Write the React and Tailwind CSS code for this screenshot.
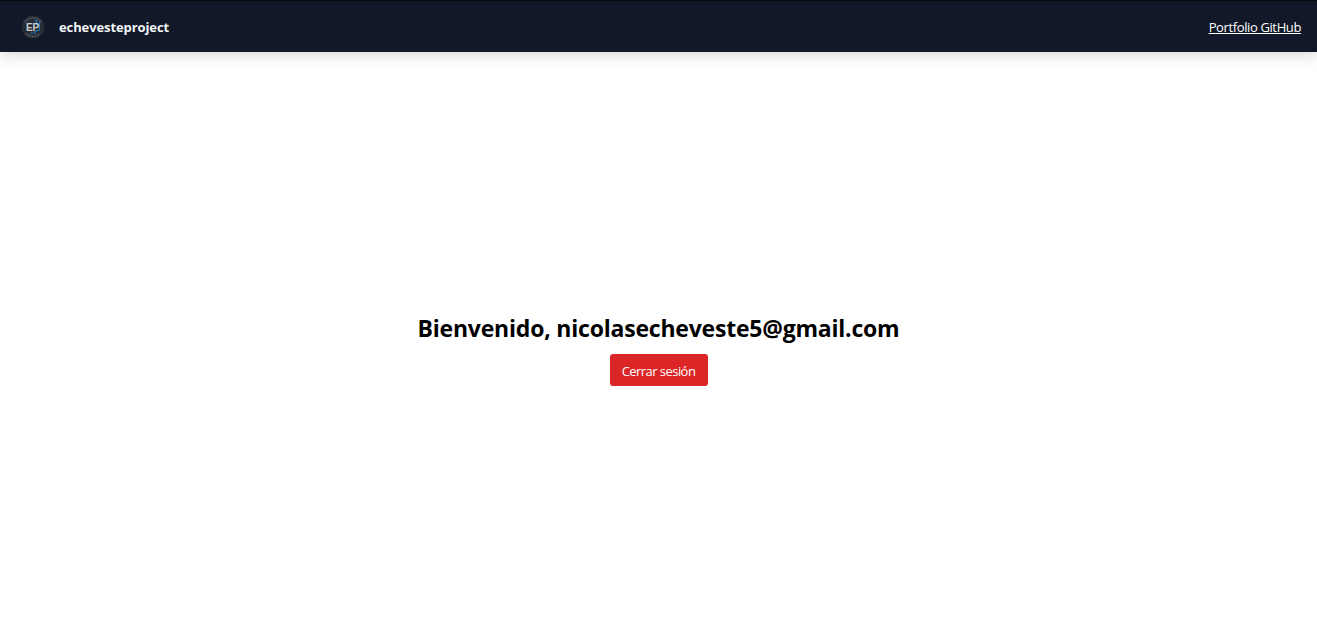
function Logo() {
  return (
    <svg className="size-6" viewBox="0 0 24 24" role="img" aria-label="EP">
      <circle cx="12" cy="12" r="11.5" fill="#262c34" />
      <path d="M4 7.5A9.2 9.2 0 0 1 20 7.5M5 18.2A9.2 9.2 0 0 0 19 18.2" fill="none" stroke="#8a9098" strokeWidth="1.5" strokeDasharray="1.3 0.9" opacity="0.5" />
      <path d="M13.500 5.500h2v3l3 1v5.500l-4.500 1.500v2.500M18.500 6.500v3M9.500 18h2.500" fill="none" stroke="#1a7cc4" strokeWidth="1.2" opacity="0.9" />
      <text x="11.6" y="15.6" textAnchor="middle" fontSize="10" fontWeight="600" fontFamily="Liberation Sans, sans-serif" fill="#c9cdd1">EP</text>
    </svg>
  );
}

export default function App() {
  return (
    <div className="flex h-screen flex-col bg-white font-['Open_Sans','Noto_Sans',sans-serif] text-black">
      <header className="flex h-[52px] shrink-0 items-center justify-between border-t border-[#09090b] bg-[#111827] pl-[21px] pr-4 text-white shadow-[0_4px_13px_rgba(0,0,0,0.15)]">
        <div className="flex items-center gap-[14px]">
          <Logo />
          <span className="pt-0.5 text-[13px] font-bold tracking-[-0.1px] text-gray-100">echevesteproject</span>
        </div>
        <a href="#" className="pt-0.5 text-[13px] tracking-[-0.38px] underline">Portfolio GitHub</a>
      </header>
      <main className="flex grow flex-col items-center justify-center gap-2.5 pt-[18px]">
        <h1 className="text-[23px]/8 font-bold tracking-[-0.21px]">Bienvenido, nicolasecheveste5@gmail.com</h1>
        <button className="h-8 w-[98px] rounded-[3px] bg-[#dc2626] pt-[3px] text-[13px] tracking-[-0.55px] text-white">Cerrar sesión</button>
      </main>
    </div>
  );
}
